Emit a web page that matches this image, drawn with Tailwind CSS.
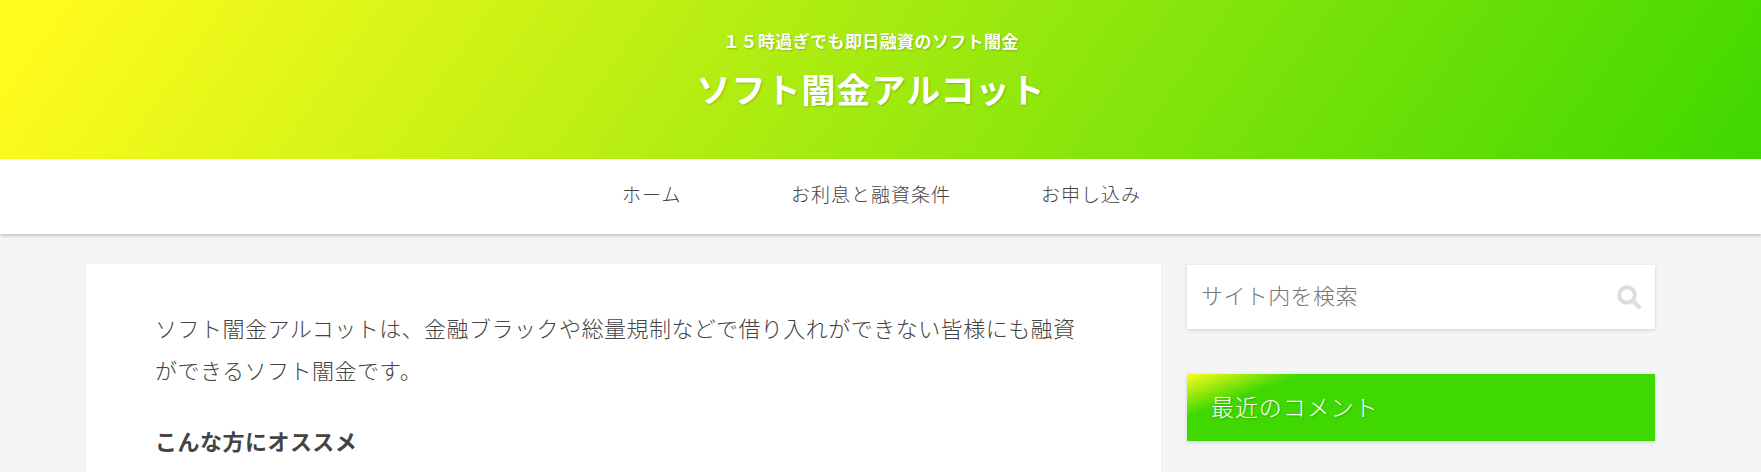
<!DOCTYPE html>
<html lang="ja">
<head>
    <meta charset="UTF-8">
    <meta name="viewport" content="width=device-width, initial-scale=1.0">
    <title>ソフト闇金アルコット</title>
    <script src="https://cdn.jsdelivr.net/npm/@tailwindcss/browser@4"></script>
</head>
<body class="bg-[#f4f5f7] h-[472px] overflow-hidden font-['Noto_Sans_CJK_JP','Noto_Sans',sans-serif] font-light">
    <!-- Header -->
    <header class="h-[159px] bg-[linear-gradient(125deg,#fffb1d_3%,#3fd800_100%)] flex flex-col items-center pr-[19px] text-white [text-shadow:1px_1px_2px_rgba(0,0,0,0.2)]">
        <p class="mt-[28px] h-[26px] text-[17px] leading-[26px] font-bold tracking-[0.4px]">１５時過ぎでも即日融資のソフト闇金</p>
        <h1 class="mt-[12px] text-[34px] leading-[46px] font-bold tracking-[1px]">ソフト闇金アルコット</h1>
    </header>

    <!-- Navigation -->
    <nav class="h-[75px] bg-white shadow-[0_2px_3px_rgba(0,0,0,0.2)] relative flex items-center pb-[4px] text-[#444] text-[19px] tracking-[1px]">
        <a href="#" class="ml-[622px] w-[169px]">ホーム</a>
        <a href="#" class="w-[250px]">お利息と融資条件</a>
        <a href="#">お申し込み</a>
    </nav>

    <!-- Main -->
    <div class="flex mt-[30px] ml-[86px] gap-[26px] items-start">
        <main class="w-[1075px] h-[300px] bg-white shadow-[0_1px_3px_rgba(0,0,0,0.06)] pl-[69px] pt-[42px] text-[#444]">
            <p class="text-[22px] leading-[42px] tracking-[0.48px] w-[935px]">ソフト闇金アルコットは、金融ブラックや総量規制などで借り入れができない皆様にも融資ができるソフト闇金です。</p>
            <h3 class="mt-[29px] text-[22px] leading-[42px] font-bold text-[#444] tracking-[0.48px]">こんな方にオススメ</h3>
        </main>

        <aside class="w-[468px] mt-px">
            <div class="h-[64px] bg-white shadow-[0_1px_4px_rgba(0,0,0,0.15)] flex items-center justify-between pl-[14px] pr-[14px]">
                <span class="text-[22px] pb-[6px] tracking-[0.4px] text-[#777]">サイト内を検索</span>
                <svg class="w-[24px] h-[24px] text-[#ddd]" viewBox="0 0 24 24" fill="none" stroke="currentColor">
                    <circle cx="10" cy="10" r="7.8" stroke-width="4"/>
                    <path d="M15.5 15.5L22 22" stroke-width="4.2" stroke-linecap="round"/>
                </svg>
            </div>
            <div class="mt-[45px] h-[67px] bg-[linear-gradient(160deg,#fffb1d_0%,#3fd800_18%,#3fd800_100%)] shadow-[0_1px_4px_rgba(0,0,0,0.15)] flex items-center pl-[24px] pb-[2px] text-white text-[23px] tracking-[0.9px] [text-shadow:1px_1px_2px_rgba(0,0,0,0.2)]">最近のコメント</div>
        </aside>
    </div>
</body>
</html>
